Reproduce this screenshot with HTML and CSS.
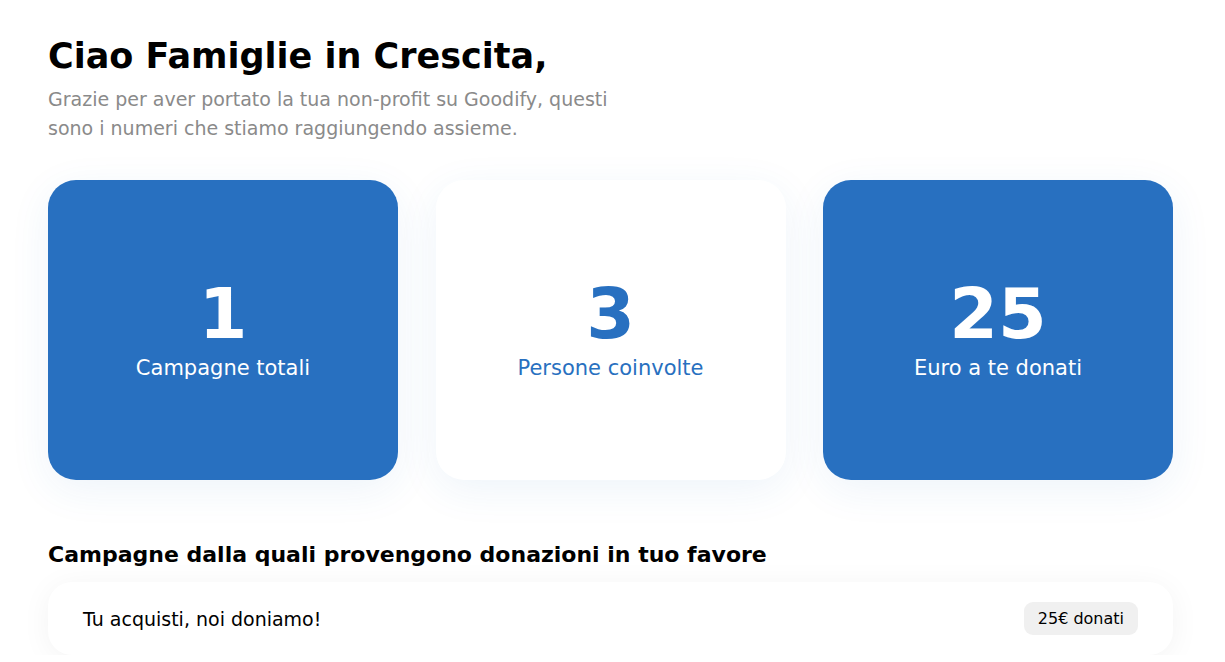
FILE: index.html
```html
<!DOCTYPE html>
<html>
  <head>
    <title>Dashboard Non-profit</title>
    <link rel="stylesheet" href="styles.css">
  </head>
  <body>
    <div class="container">
      <h1>Ciao Famiglie in Crescita,</h1>
      <p class="intro">Grazie per aver portato la tua non-profit su Goodify, questi sono i numeri che stiamo raggiungendo assieme.</p>

      <div class="stats">
        <div class="stat stat-blue">
          <span class="stat-num">1</span>
          <span class="stat-label">Campagne totali</span>
        </div>
        <div class="stat stat-white">
          <span class="stat-num">3</span>
          <span class="stat-label">Persone coinvolte</span>
        </div>
        <div class="stat stat-blue">
          <span class="stat-num">25</span>
          <span class="stat-label">Euro a te donati</span>
        </div>
      </div>

      <h2>Campagne dalla quali provengono donazioni in tuo favore</h2>
      <div class="campaign">
        <span class="campaign-name">Tu acquisti, noi doniamo!</span>
        <span class="badge">25€ donati</span>
      </div>
    </div>
  </body>
</html>
```

FILE: styles.css
```css
body {
  font-family: "DejaVu Sans", "Open Sans", sans-serif;
  margin: 0;
  padding: 0;
  background: #fff;
  color: #000;
}
.container {
  width: 1125px;
  padding: 33px 0 0 48px;
}
h1 {
  font-size: 35px;
  font-weight: 700;
  margin: 0;
  line-height: 46px;
}
.intro {
  max-width: 590px;
  color: #8a8a8a;
  font-size: 19px;
  line-height: 29px;
  margin: 6px 0 0;
}
.stats {
  display: grid;
  grid-template-columns: repeat(3, 350px);
  column-gap: 37.5px;
  margin-top: 37px;
}
.stat {
  height: 300px;
  border-radius: 28px;
  display: flex;
  flex-direction: column;
  align-items: center;
  justify-content: center;
  box-shadow: 0 10px 40px rgba(40, 112, 192, 0.08);
}
.stat-blue {
  background: #2870c0;
  color: #fff;
}
.stat-white {
  background: #fff;
  color: #2870c0;
}
.stat-num {
  font-size: 70px;
  font-weight: 700;
  line-height: 82px;
  margin-top: 8px;
}
.stat-label {
  font-size: 21px;
  line-height: 26px;
  margin-bottom: 14px;
}
h2 {
  font-size: 22px;
  font-weight: 700;
  margin: 60px 0 0;
  line-height: 30px;
}
.campaign {
  margin-top: 12px;
  height: 73px;
  border-radius: 24px;
  background: #fff;
  display: flex;
  align-items: center;
  justify-content: space-between;
  padding: 0 35px;
  box-shadow: 0 4px 30px rgba(0, 0, 0, 0.05);
}
.campaign-name {
  font-size: 19px;
}
.badge {
  background: #f0f0f0;
  border-radius: 9px;
  font-size: 16px;
  padding: 7px 14px;
}
```
